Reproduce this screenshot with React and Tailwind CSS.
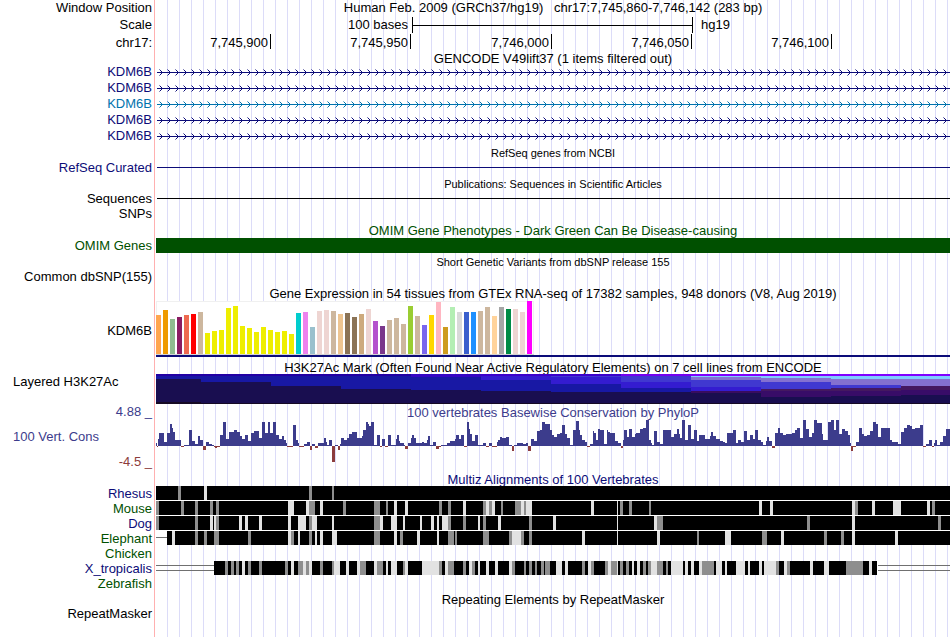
const NAVY = "text-[#0c0c78]";
const GREEN = "text-[#005000]";
const CONS = "text-[#3c3c8c]";

const TISSUES = [
  ["#ffa54f", 39], ["#ee9a00", 44], ["#8fbc8f", 35], ["#8b1c62", 37], ["#ee6a50", 39], ["#ff0000", 40],
  ["#cdb79e", 42], ["#eeee00", 21], ["#eeee00", 23], ["#eeee00", 24], ["#eeee00", 46], ["#eeee00", 48],
  ["#eeee00", 28], ["#eeee00", 26], ["#eeee00", 22], ["#eeee00", 27], ["#eeee00", 24], ["#eeee00", 22],
  ["#eeee00", 23], ["#eeee00", 20], ["#00cdcd", 41], ["#ee82ee", 42], ["#9ac0cd", 27], ["#eed5d2", 43],
  ["#eed5d2", 44], ["#cdb79e", 43], ["#eec591", 40], ["#8b7355", 41], ["#8b7355", 37], ["#cdaa7d", 40],
  ["#eed5d2", 45], ["#b452cd", 33], ["#7a378b", 28], ["#cdb79e", 34], ["#cdb79e", 36], ["#cdb79e", 30],
  ["#9acd32", 48], ["#cdb79e", 38], ["#7a67ee", 29], ["#ffd700", 39], ["#ffb6c1", 52], ["#cd9b1d", 27],
  ["#b4eeb4", 47], ["#d9d9d9", 42], ["#3a5fcd", 42], ["#1e90ff", 42], ["#cdb79e", 43], ["#cdb79e", 47],
  ["#ffd39b", 38], ["#a6a6a6", 47], ["#008b45", 45], ["#eed5d2", 45], ["#eed5d2", 42], ["#ff00ff", 53],
];

// Each column: start, end, then [bottom of band, colour] from the top down.
const ACETYLATION = [
  [0, 45, [[2, "#2200a4"], [5, "#1818a4"], [28, "#190e50"], [30, "#160a24"]]],
  [45, 115, [[2, "#2200a4"], [8, "#1818a4"], [29, "#190e50"], [30, "#160a24"]]],
  [115, 185, [[2, "#2200a4"], [12, "#1818a4"], [29, "#190e50"], [30, "#160a24"]]],
  [185, 255, [[2, "#2200a4"], [15, "#1818a4"], [29, "#190e50"], [30, "#160a24"]]],
  [255, 325, [[3, "#3606c4"], [16, "#1818a4"], [29, "#190e50"], [30, "#160a24"]]],
  [325, 395, [[2, "#3c00cc"], [6, "#341cd0"], [17, "#1818a4"], [29, "#190e50"], [30, "#160a24"]]],
  [395, 465, [[2, "#3c00cc"], [3, "#4038d0"], [10, "#341cd0"], [18, "#1818a4"], [29, "#190e50"], [30, "#160a24"]]],
  [465, 535, [[2, "#7400f0"], [8, "#4038d0"], [14, "#341cd0"], [18, "#1818a4"], [29, "#190e50"], [30, "#160a24"]]],
  [535, 605, [[2, "#8000ff"], [3, "#80ccff"], [6, "#8470d0"], [13, "#4038d0"], [17, "#341cd0"], [19, "#380c60"], [29, "#190e50"], [30, "#160a24"]]],
  [605, 675, [[2, "#8000ff"], [4, "#80ccff"], [8, "#8470d0"], [15, "#4038d0"], [17, "#441860"], [23, "#380c68"], [29, "#190e50"], [30, "#160a24"]]],
  [675, 745, [[2, "#8000ff"], [5, "#80ccff"], [11, "#8470d0"], [14, "#4038d0"], [17, "#441860"], [22, "#380c68"], [29, "#190e50"], [30, "#160a24"]]],
  [745, 794, [[2, "#8000ff"], [5, "#80ccff"], [12, "#8470d0"], [16, "#441860"], [21, "#380c68"], [29, "#190e50"], [30, "#160a24"]]],
];

// start:score pairs, each one running up to the next start.
const PHYLOP = `0:3 1:-1 2:7 3:13 8:4 11:13 14:22 16:18 17:14 19:6 25:-1 28:1 33:16 36:5 39:2 42:10 44:6 47:-4 50:4 53:2 56:1
58:-1 59:-2 61:-1 64:11 67:24 70:7 73:14 78:16 81:14 84:10 86:7 89:11 92:5 95:13 98:15 103:8 106:24 109:13 112:24 114:13
117:24 120:11 123:7 126:10 128:6 130:3 131:-1 137:21 140:6 142:3 143:-1 148:2 151:4 154:-4 156:2 159:-2 162:3 168:8 170:4
171:1 173:6 176:-16 179:1 182:-4 184:2 185:8 188:6 191:8 193:12 196:14 201:8 206:10 207:16 210:24 212:22 213:20 215:24
218:1 221:11 224:-1 226:7 229:-1 232:11 235:1 240:7 241:11 243:5 244:3 248:1 249:-3 252:3 255:8 256:11 258:8 260:3 266:4
268:3 271:6 272:10 274:1 277:4 280:-3 283:-1 285:1 291:3 294:5 299:7 300:11 303:7 305:11 308:-1 311:24 313:17 314:12
316:5 319:11 322:1 327:3 330:-1 333:3 336:-1 341:4 342:6 344:9 346:8 350:9 353:1 356:-5 358:1 361:3 367:2 370:3 372:-5
375:7 378:5 381:15 384:16 386:24 389:22 394:16 396:11 398:9 401:12 404:13 406:21 409:12 411:8 414:1 417:16 420:25 423:16
424:11 426:6 429:4 431:-1 434:2 437:15 438:13 440:6 442:17 444:16 448:2 451:16 452:14 454:13 459:5 462:3 465:-2 467:6
468:16 471:9 473:17 476:9 479:12 480:13 484:17 487:18 490:26 493:6 495:3 496:1 498:15 501:4 504:2 507:16 515:9 518:12
521:17 523:12 524:8 526:26 529:6 532:21 535:7 538:16 541:5 543:11 549:7 554:10 555:14 557:10 560:7 564:5 567:4 569:3
571:13 577:16 580:3 582:6 585:4 588:15 591:6 594:11 597:7 599:16 602:6 605:4 607:1 610:5 611:9 613:5 616:-2 619:13
622:18 624:13 627:11 630:12 636:13 639:16 641:18 644:8 647:26 650:17 653:9 656:13 658:26 661:23 666:12 667:6 672:24
675:26 678:16 680:26 683:12 686:17 689:15 692:11 694:3 695:-5 697:-1 700:4 703:18 706:12 708:10 711:11 714:15 717:24
720:22 722:9 725:18 734:6 736:4 742:2 745:14 748:18 751:21 754:20 756:17 759:18 764:21 767:-1 770:2 773:6 776:-1 778:3
779:6 781:1 784:4 787:10 790:17`
  .split(/\s+/)
  .map((pair) => pair.split(":").map(Number));

// Lower-identity blocks inside each alignment: grade (g = mid, l = low), start, width.
const ALIGNMENTS = [
  {
    name: "Rhesus", color: NAVY, from: 0, to: 794,
    blocks: "g22,3 l48,3 g153,3 g176,2",
  },
  {
    name: "Mouse", color: GREEN, from: 0, to: 794,
    blocks: "g0,3 g25,3 g39,3 g54,3 g60,3 l132,6 l150,3 g153,6 l164,3 g187,3 g218,6 g230,2 l238,3 l249,3 g283,3 g292,3 l307,3 g327,3 l330,3 g333,3 l336,3 g345,2 g359,6 l365,3 g368,2 l370,6 l435,3 l461,1 g464,3 g473,3 g493,2 l603,3 l614,3 l696,3 g699,3 l716,3 l737,8 l771,3 g776,3",
  },
  {
    name: "Dog", color: NAVY, from: 0, to: 794,
    blocks: "g0,3 g39,3 l54,3 l58,2 g60,3 l83,3 l89,3 l103,3 l132,3 l142,8 g153,3 l156,5 l176,2 g218,6 l224,3 l235,6 l247,2 l264,2 l275,3 l281,2 l286,6 g292,3 g307,3 l322,2 g327,3 l342,3 g373,3 l397,3 l461,1 l498,3 g501,6 g651,3 l696,3 g782,3",
  },
  {
    name: "Elephant", color: GREEN, from: 11, to: 794, gaps: [[0, 6, 11]],
    blocks: "l16,3 g39,3 g48,3 g58,5 g92,3 l132,3 g135,3 l142,2 g153,3 l159,2 l164,3 l176,5 g218,6 l238,3 g244,3 l261,3 l281,2 g292,6 g299,2 g327,6 g353,3 l356,9 g365,3 g373,3 l426,3 l461,1 l501,3 g541,2 l569,6 g606,5 l625,3 g668,3 g685,3 l696,3 l739,3",
  },
  { name: "Chicken", color: GREEN },
  {
    name: "X_tropicalis", color: NAVY, from: 58, to: 721,
    gaps: [[0, 4, 58], [0, 9, 58], [722, 4, 72], [722, 9, 72]],
    blocks: "g69,3 g75,3 g80,3 l86,3 g92,3 g103,3 g129,3 l135,3 g142,5 l147,3 g150,3 l153,3 g164,3 g176,2 l178,6 l190,3 l201,3 g204,6 l218,3 g221,6 l230,2 l235,6 g247,2 l249,3 l266,17 g283,3 l289,3 g292,6 g307,3 l313,3 g316,3 l322,2 l330,3 l339,3 l353,3 g356,3 g368,2 g373,3 g379,2 g385,3 g389,5 l400,6 l409,3 g426,3 l432,3 g435,3 g449,3 l452,3 g455,6 l461,1 g464,3 g470,3 l476,2 l481,3 g487,3 g492,3 l495,6 g501,6 g510,2 l515,12 l529,3 l535,3 l543,3 g546,12 l560,6 l569,2 l580,9 l592,2 l603,3 l608,12 g620,3 l628,3 g631,3 l654,3 l668,5 g690,17 l713,3",
  },
  { name: "Zebrafish", color: GREEN },
];

function Row({ label, color = "text-black", height = "h-4", children }) {
  return (
    <div className={`grid grid-cols-[155px_minmax(0,1fr)] grid-rows-[minmax(0,1fr)] ${height}`}>
      <div className={`flex items-center justify-end border-r border-[#ffb0b0] pr-0.5 ${color}`}>{label}</div>
      <div className="ml-px flex min-w-0 flex-col justify-center bg-[repeating-linear-gradient(to_right,transparent_0px,transparent_11px,#dcdcf8_11px,#dcdcf8_12px)]">
        {children}
      </div>
    </div>
  );
}

function Title({ children, color = "text-black", height = "h-4", small = false }) {
  return (
    <Row height={height}>
      <h2 className={`pt-px text-center ${small ? "text-[11px]" : ""} ${color}`}>{children}</h2>
    </Row>
  );
}

function Plot({ height, size, children }) {
  return (
    <svg className={`block w-full ${height}`} viewBox={`0 0 794 ${size}`} preserveAspectRatio="none" shapeRendering="crispEdges">
      {children}
    </svg>
  );
}

function Transcript({ id, stroke, color }) {
  return (
    <Row label="KDM6B" color={color}>
      <svg className="block h-4 w-full">
        <defs>
          <pattern id={id} width="8" height="16" patternUnits="userSpaceOnUse">
            <path d="M3.5 5.5 6.5 8.5 3.5 11.5" fill="none" stroke={stroke} strokeWidth="1" />
          </pattern>
        </defs>
        <rect width="100%" height="16" fill={`url(#${id})`} />
        <rect x="1" y="8" width="100%" height="1" fill={stroke} />
      </svg>
    </Row>
  );
}

function Alignment({ name, color, from, to, gaps = [], blocks }) {
  return (
    <Row label={name} color={color} height="h-[15px]">
      {blocks && (
        <Plot height="h-[15px]" size={15}>
          {gaps.map(([x, y, w]) => (
            <rect key={`${x}-${y}`} x={x} y={y} width={w} height="1" fill="#707070" />
          ))}
          <rect x={from} y="0" width={to - from} height="14" fill="#000" />
          {name !== "X_tropicalis" && name !== "Elephant" && <rect y="14" width="794" height="1" fill="#fff" />}
          {blocks.split(" ").map((block) => {
            const [x, w] = block.slice(1).split(",");
            return <rect key={block} x={x} y="0" width={w} height="14" fill={block[0] === "g" ? "#8e8e8e" : "#e2e2e2"} />;
          })}
        </Plot>
      )}
    </Row>
  );
}

export default function App() {
  return (
    <main className="bg-white font-['Liberation_Sans',Arial,sans-serif] text-[13px] leading-4 text-black">
      <Row label="Window Position">
        <h1 className="text-center whitespace-pre">Human Feb. 2009 (GRCh37/hg19)   chr17:7,745,860-7,746,142 (283 bp)</h1>
      </Row>
      <Row label="Scale" height="h-[18px]">
        <div className="grid grid-cols-[256fr_281fr_257fr] items-center">
          <span className="pr-1 text-right">100 bases</span>
          <span className="flex h-4 items-center border-x border-black">
            <span className="h-px w-full bg-black" />
          </span>
          <span className="pl-2">hg19</span>
        </div>
      </Row>
      <Row label="chr17:" height="h-[18px]">
        <div className="grid h-full grid-cols-[115fr_140fr_141fr_140fr_140fr_118fr] items-start text-right">
          {["7,745,900", "7,745,950", "7,746,000", "7,746,050", "7,746,100"].map((base) => (
            <span key={base} className="h-[15px] border-r border-black pr-0.5 leading-[18px]">{base}</span>
          ))}
        </div>
      </Row>

      <Title height="h-3">GENCODE V49lift37 (1 items filtered out)</Title>
      <Transcript id="transcript-1" stroke="#0c0c78" color={NAVY} />
      <Transcript id="transcript-2" stroke="#0c0c78" color={NAVY} />
      <Transcript id="transcript-3" stroke="#0073ad" color="text-[#0073ad]" />
      <Transcript id="transcript-4" stroke="#0c0c78" color={NAVY} />
      <Transcript id="transcript-5" stroke="#0c0c78" color={NAVY} />

      <Title small>RefSeq genes from NCBI</Title>
      <Row label="RefSeq Curated" color={NAVY} height="h-[15px]">
        <div className="ml-px h-px bg-[#0c0c78]" />
      </Row>
      <Title small>Publications: Sequences in Scientific Articles</Title>
      <Row label="Sequences" height="h-[15px]">
        <div className="ml-px h-px bg-black" />
      </Row>
      <Row label="SNPs" />

      <Title color={GREEN}>OMIM Gene Phenotypes - Dark Green Can Be Disease-causing</Title>
      <Row label="OMIM Genes" color={GREEN} height="h-[15px]">
        <div className="h-full bg-[#005000]" />
      </Row>
      <Title small>Short Genetic Variants from dbSNP release 155</Title>
      <Row label="Common dbSNP(155)" />

      <Title>Gene Expression in 54 tissues from GTEx RNA-seq of 17382 samples, 948 donors (V8, Aug 2019)</Title>
      <Row label="KDM6B" height="h-[59px]">
        <div className="flex h-full flex-col">
          <svg className="block h-[54px] w-[378px]" viewBox="0 0 378 54" shapeRendering="crispEdges">
            <rect width="378" height="54" fill="#f0f0f0" />
            <rect x="1" y="1" width="376" height="52" fill="#fff" />
            <rect y="53" width="378" height="1" fill="#d4d4d4" />
            {TISSUES.map(([fill, h], i) => (
              <rect key={i} x={i * 7} y={53 - h} width="5" height={h} fill={fill} />
            ))}
          </svg>
          <div className="h-0.5 bg-[#0c0c78]" />
        </div>
      </Row>

      <Title height="h-[14px]">H3K27Ac Mark (Often Found Near Active Regulatory Elements) on 7 cell lines from ENCODE</Title>
      <Row label={<span className="mb-auto mr-auto pl-[13px]">Layered H3K27Ac</span>} height="h-[30px]">
        <Plot height="h-[30px]" size={30}>
          {ACETYLATION.map(([start, end, bands]) =>
            bands.map(([bottom, fill], i) => {
              const top = i ? bands[i - 1][0] : 0;
              return <rect key={`${start}-${top}`} x={start} y={top} width={end - start} height={bottom - top} fill={fill} />;
            })
          )}
        </Plot>
      </Row>

      <Row
        height="h-[68px]"
        color={CONS}
        label={
          <div className="flex h-full w-full flex-col justify-between pb-0.5 text-right">
            <span>4.88 _</span>
            <span className="pl-[13px] text-left">100 Vert. Cons</span>
            <span className="text-[#8c3c3c]">-4.5 _</span>
          </div>
        }
      >
        <h2 className={`h-4 pt-px text-center ${CONS}`}>100 vertebrates Basewise Conservation by PhyloP</h2>
        <Plot height="h-[52px]" size={52}>
          {PHYLOP.map(([x, score], i) => {
            const end = i + 1 < PHYLOP.length ? PHYLOP[i + 1][0] : 794;
            return (
              <rect
                key={x}
                x={x}
                y={score > 0 ? 26 - score : 26}
                width={end - x}
                height={Math.abs(score)}
                fill={score > 0 ? "#3c3c8c" : "#8c3c3c"}
              />
            );
          })}
        </Plot>
      </Row>

      <Title height="h-[14px]" color={NAVY}>Multiz Alignments of 100 Vertebrates</Title>
      {ALIGNMENTS.map((species) => (
        <Alignment key={species.name} {...species} />
      ))}

      <Title>Repeating Elements by RepeatMasker</Title>
      <Row label="RepeatMasker" height="h-[14px]" />
      <Row />
    </main>
  );
}
